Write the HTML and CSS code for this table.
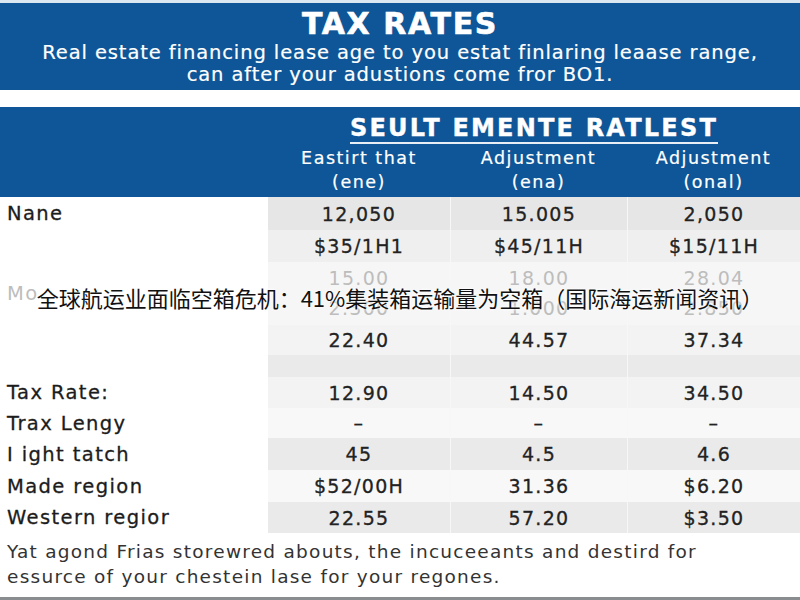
FILE: index.html
```html
<!DOCTYPE html>
<html lang="en">
<head>
<meta charset="utf-8">
<title>Tax Rates</title>
<link rel="stylesheet" href="styles.css">
</head>
<body>
<div class="page">
  <header class="banner">
    <h1 class="banner-title">TAX RATES</h1>
    <p class="banner-sub">Real estate financing lease age to you estat finlaring leaase range,<br>can after your adustions come fror BO1.</p>
  </header>

  <section class="table">
    <div class="thead">
      <div class="thead-title">SEULT EMENTE RATLEST</div>
      <div class="th th-label"></div>
      <div class="th">Eastirt that<br>(ene)</div>
      <div class="th">Adjustment<br>(ena)</div>
      <div class="th">Adjustment<br>(onal)</div>
    </div>

    <div class="row r-a h33"><div class="label">Nane</div><div class="cell">12,050</div><div class="cell">15.005</div><div class="cell">2,050</div></div>
    <div class="row r-b h32"><div class="label"></div><div class="cell">$35/1H1</div><div class="cell">$45/11H</div><div class="cell">$15/11H</div></div>
    <div class="row r-c faded h63">
      <div class="label">Mo</div>
      <div class="cell stack"><span>15.00</span><span>2.300</span></div>
      <div class="cell stack"><span>18.00</span><span>1.000</span></div>
      <div class="cell stack"><span>28.04</span><span>2.850</span></div>
    </div>
    <div class="row r-d h30"><div class="label"></div><div class="cell">22.40</div><div class="cell">44.57</div><div class="cell">37.34</div></div>
    <div class="row r-e h22"><div class="label"></div><div class="cell"></div><div class="cell"></div><div class="cell"></div></div>
    <div class="row r-d h31"><div class="label">Tax Rate:</div><div class="cell">12.90</div><div class="cell">14.50</div><div class="cell">34.50</div></div>
    <div class="row r-w h30"><div class="label">Trax Lengy</div><div class="cell">–</div><div class="cell">–</div><div class="cell">–</div></div>
    <div class="row r-e h32"><div class="label">I ight tatch</div><div class="cell">45</div><div class="cell">4.5</div><div class="cell">4.6</div></div>
    <div class="row r-w h32"><div class="label">Made region</div><div class="cell">$52/00H</div><div class="cell">31.36</div><div class="cell">$6.20</div></div>
    <div class="row r-e h31"><div class="label">Western regior</div><div class="cell">22.55</div><div class="cell">57.20</div><div class="cell">$3.50</div></div>
  </section>

  <p class="note">Yat agond Frias storewred abouts, the incuceeants and destird for<br>essurce of your chestein lase for your regones.</p>

  <div class="caption">全球航运业面临空箱危机：41%集装箱运输量为空箱（国际海运新闻资讯）</div>
</div>
</body>
</html>
```
FILE: styles.css
```css
* { box-sizing: border-box; margin: 0; padding: 0; }
html, body { width: 800px; height: 600px; overflow: hidden; background: #fff; }
body { font-family: "DejaVu Sans", "Liberation Sans", sans-serif; color: #222; }

.page {
  position: relative;
  width: 800px;
  height: 600px;
  border-top: 3px solid #dbe7f1;
  border-bottom: 3px solid #8a8d90;
  display: flex;
  flex-direction: column;
}

.banner {
  background: #0e5697;
  height: 87px;
  color: #fff;
  text-align: center;
  padding-top: 5px;
}
.banner-title {
  font-weight: 700;
  font-size: 30px;
  line-height: 32px;
  letter-spacing: 1.6px;
  -webkit-text-stroke: 0.6px #fff;
}
.banner-sub {
  font-size: 19.5px;
  line-height: 22px;
  font-weight: 400;
  letter-spacing: 0.9px;
  -webkit-text-stroke: 0.2px #fff;
  margin-top: 2px;
}

.table { margin-top: 17px; }

.thead {
  background: #0e5697;
  height: 90px;
  color: #fff;
  display: grid;
  grid-template-columns: 268px 182px 177px 173px;
  grid-template-rows: 38px 52px;
}
.thead-title {
  grid-column: 2 / 5;
  justify-self: center;
  align-self: end;
  font-weight: 700;
  font-size: 24px;
  line-height: 26px;
  letter-spacing: 2.2px;
  -webkit-text-stroke: 0.4px #fff;
  border-bottom: 2px solid #e8eef5;
  padding: 0 0 1px;
  margin-bottom: 1px;
}
.th {
  grid-row: 2;
  text-align: center;
  font-size: 17.5px;
  line-height: 24px;
  padding-top: 1px;
  letter-spacing: 1.5px;
  -webkit-text-stroke: 0.2px #fff;
}

.row {
  display: grid;
  grid-template-columns: 268px 182px 177px 173px;
  align-items: center;
}
.h33 { height: 33px; }
.h32 { height: 32px; }
.h31 { height: 31px; }
.h30 { height: 30px; }
.h22 { height: 22px; }
.h63 { height: 63px; }

.label {
  height: 100%;
  display: flex;
  align-items: center;
  padding-left: 7px;
  font-size: 19.5px;
  letter-spacing: 1.4px;
  color: #1c1c1c;
  -webkit-text-stroke: 0.3px #1c1c1c;
  background: #fff;
}
.cell {
  height: 100%;
  display: flex;
  align-items: center;
  justify-content: center;
  font-size: 19px;
  letter-spacing: 1.3px;
  color: #222;
  -webkit-text-stroke: 0.3px #222;
  border-left: 1px solid #f7f7f7;
}
.row .cell:nth-child(2) { border-left: none; }

.r-a .cell { background: #e6e6e6; }
.r-b .cell { background: #efefef; }
.r-c .cell { background: #f6f6f6; }
.r-d .cell { background: #f3f3f3; }
.r-e .cell { background: #eaeaea; }
.r-w .cell { background: #f8f8f8; }

.faded .cell, .faded .label { color: #bdbdbd; -webkit-text-stroke: 0; }
.stack { flex-direction: column; justify-content: space-between; padding: 3px 0 4px; line-height: 26px; }

.note {
  margin-top: 6px;
  padding-left: 7px;
  font-size: 18.5px;
  line-height: 25px;
  letter-spacing: 1.25px;
  color: #333;
}

.caption {
  position: absolute;
  left: 0;
  right: 0;
  top: 279px;
  text-align: center;
  font-family: "Noto Sans CJK SC", "Noto Sans", sans-serif;
  font-size: 22px;
  line-height: 30px;
  color: #111;
  text-shadow: 0 0 3px #fff, 0 0 3px #fff;
}
```
